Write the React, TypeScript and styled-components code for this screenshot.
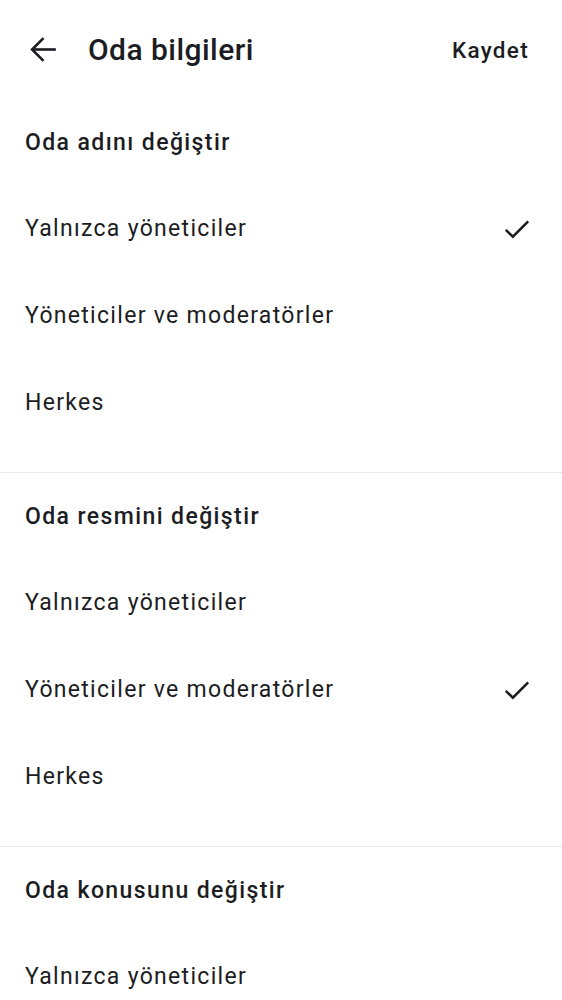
import React from "react";
import styled, { createGlobalStyle } from "styled-components";

const Global = createGlobalStyle`
  html, body { margin: 0; padding: 0; background: #ffffff; }
  body { font-family: Roboto, "Noto Sans", sans-serif; color: #1c1d22; -webkit-font-smoothing: antialiased; }
`;

const Page = styled.div`
  width: 562px;
  background: #ffffff;
`;

const TopBar = styled.header`
  height: 99px;
  display: flex;
  align-items: center;
  padding: 0 33px 0 25px;
  box-sizing: border-box;
`;

const BackButton = styled.button`
  border: none;
  background: none;
  padding: 0;
  width: 37px;
  height: 37px;
  display: flex;
  align-items: center;
  justify-content: center;
  color: #1c1d22;
  cursor: pointer;
`;

const Title = styled.h1`
  margin: 0 0 0 26px;
  flex: 1;
  font-size: 30px;
  font-weight: 500;
  letter-spacing: 0.45px;
`;

const SaveButton = styled.button`
  border: none;
  background: none;
  padding: 0;
  font-family: inherit;
  font-size: 22.5px;
  font-weight: 500;
  letter-spacing: 1.3px;
  color: #1c1d22;
  cursor: pointer;
`;

const Section = styled.section<{ $divider?: boolean }>`
  padding-bottom: 26px;
  border-bottom: ${(p) => (p.$divider ? "1px solid #e7e9ee" : "none")};
`;

const SectionTitle = styled.h2`
  margin: 0;
  height: 86px;
  display: flex;
  align-items: center;
  padding: 0 25px;
  font-size: 23px;
  font-weight: 500;
  letter-spacing: 1.4px;
`;

const Option = styled.div`
  height: 87px;
  display: flex;
  align-items: center;
  justify-content: space-between;
  padding: 0 29px 0 25px;
  font-size: 23px;
  font-weight: 400;
  letter-spacing: 1.3px;
`;

const CheckIcon = styled.svg`
  width: 32px;
  height: 32px;
  flex: none;
`;

const Check = () => (
  <CheckIcon viewBox="0 0 24 24" fill="none">
    <path d="M3.6 12.6 L8.9 17.8 L20.4 6.3" stroke="#1c1d22" strokeWidth="1.9" />
  </CheckIcon>
);

const Arrow = () => (
  <svg width="37" height="37" viewBox="0 0 24 24" fill="none" stroke="#1c1d22" strokeWidth="1.7">
    <path d="M4.6 12 H20" />
    <path d="M12 4.6 L4.6 12 L12 19.4" />
  </svg>
);

const options = ["Yalnızca yöneticiler", "Yöneticiler ve moderatörler", "Herkes"];

const sections = [
  { title: "Oda adını değiştir", selected: 0 },
  { title: "Oda resmini değiştir", selected: 1 },
  { title: "Oda konusunu değiştir", selected: -1 },
];

export default function App() {
  return (
    <Page>
      <Global />
      <TopBar>
        <BackButton aria-label="Geri">
          <Arrow />
        </BackButton>
        <Title>Oda bilgileri</Title>
        <SaveButton>Kaydet</SaveButton>
      </TopBar>
      {sections.map((s, i) => (
        <Section key={s.title} $divider={i < sections.length - 1}>
          <SectionTitle>{s.title}</SectionTitle>
          {options.map((o, j) => (
            <Option key={o}>
              <span>{o}</span>
              {s.selected === j && <Check />}
            </Option>
          ))}
        </Section>
      ))}
    </Page>
  );
}
